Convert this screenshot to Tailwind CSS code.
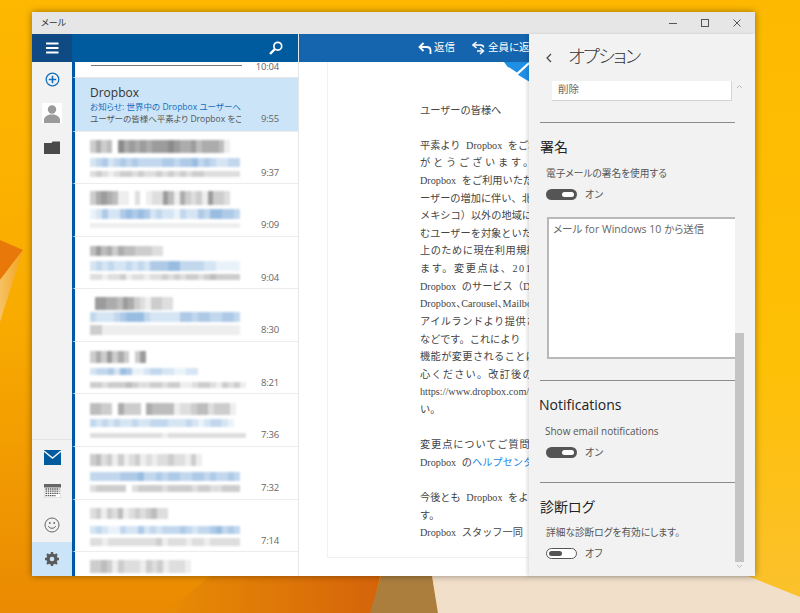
<!DOCTYPE html>
<html lang="ja">
<head>
    <meta charset="UTF-8">
    <script src="https://cdn.jsdelivr.net/npm/@tailwindcss/browser@4"></script>
    <title>メール</title>
</head>
<body class="overflow-hidden">
<div class="relative w-[800px] h-[613px] overflow-hidden bg-[#fbb900] font-['Open_Sans','Noto_Sans_CJK_JP',sans-serif] [font-feature-settings:'palt']">

    <!-- desktop wallpaper -->
    <svg class="absolute inset-0" width="800" height="613" viewBox="0 0 800 613">
        <defs>
            <linearGradient id="wall" x1="0" y1="0" x2="0" y2="1">
                <stop offset="0" stop-color="#feb800"/>
                <stop offset="0.5" stop-color="#f9ac00"/>
                <stop offset="1" stop-color="#ea8a02"/>
            </linearGradient>
            <linearGradient id="wallRight" x1="0" y1="0" x2="0" y2="1">
                <stop offset="0" stop-color="#fdb900"/>
                <stop offset="0.6" stop-color="#fec006"/>
                <stop offset="1" stop-color="#fbc12f"/>
            </linearGradient>
            <linearGradient id="burn" x1="0" y1="0" x2="1" y2="0">
                <stop offset="0" stop-color="#e88c04"/>
                <stop offset="1" stop-color="#d5640a"/>
            </linearGradient>
            <linearGradient id="wedge" x1="0" y1="0" x2="1" y2="0">
                <stop offset="0" stop-color="#f6c264"/>
                <stop offset="1" stop-color="#f4a21c"/>
            </linearGradient>
        </defs>
        <rect width="800" height="613" fill="url(#wall)"/>
        <rect x="740" width="60" height="613" fill="url(#wallRight)"/>
        <polygon points="0,240 23,250 0,280" fill="#e9780a"/>
        <polygon points="0,280 23,250 0,322" fill="url(#wedge)"/>
        <polygon points="165,613 210,576 380,576 372,613" fill="url(#burn)"/>
        <polygon points="381,576 432,576 438,613 370,613" fill="#ab7e3e"/>
        <polygon points="432,576 748,576 800,597 800,613 438,613" fill="#f1dfca"/>
    </svg>

    <!-- mail window -->
    <div class="absolute left-[32px] top-[12px] w-[723px] h-[564px] flex flex-col bg-white shadow-[0_0_7px_rgba(0,0,0,0.4)]">
        <div class="h-[22px] shrink-0 bg-[#e6e6e6] flex items-center justify-between">
            <span class="pl-[9px] text-[9px] text-[#333]">メール</span>
            <div class="flex items-center text-[#555]">
                <svg class="w-[32px] h-[22px]" viewBox="0 0 32 22"><path d="M12 11.5h8" stroke="currentColor" fill="none"/></svg>
                <svg class="w-[32px] h-[22px]" viewBox="0 0 32 22"><rect x="12.5" y="7.5" width="7" height="7" stroke="currentColor" fill="none"/></svg>
                <svg class="w-[32px] h-[22px] mr-[2px]" viewBox="0 0 32 22"><path d="M12.5 7.5l7 7M19.5 7.5l-7 7" stroke="currentColor" fill="none"/></svg>
            </div>
        </div>

        <div class="flex-1 min-h-0 flex">
            <!-- nav rail -->
            <div class="w-[40px] shrink-0 bg-[#f2f2f2] flex flex-col">
                <div class="h-[28px] bg-[#0f4a85] flex items-center justify-center">
                    <svg width="14" height="12" viewBox="0 0 14 12"><path d="M1 1.5h12.500M1 6h12.500M1 10.500h12.500" stroke="#fff" stroke-width="2"/></svg>
                </div>
                <div class="h-[34px] flex items-center justify-center">
                    <svg width="15" height="15" viewBox="0 0 15 15" fill="none" stroke="#106ebe" stroke-width="1.300"><circle cx="7.500" cy="7.500" r="6.300"/><path d="M7.500 3.800v7.400M3.800 7.500h7.400" stroke-width="1.600"/></svg>
                </div>
                <div class="h-[20px] mt-[7px] mx-[10px] bg-white flex items-center justify-center">
                    <svg width="20" height="20" viewBox="0 0 20 20" fill="#9a9a9a"><circle cx="10" cy="6.500" r="4.200"/><path d="M2 20v-3c0-3 3-4.500 5.500-5.500h5c2.500 1 5.500 2.500 5.500 5.500v3z"/></svg>
                </div>
                <div class="h-[48px] flex items-center justify-center">
                    <svg width="16" height="13" viewBox="0 0 16 13" fill="#4a4a4a"><path d="M0 2h6l1.500 0 1-1.500H16V13H0z"/></svg>
                </div>
                <div class="flex-1 border-b border-[#e2e2e2]"></div>
                <div class="h-[34px] flex items-center justify-center">
                    <svg width="17" height="15" viewBox="0 0 17 15"><rect width="17" height="15" y="0" fill="#005a9e"/><path d="M0 1l8.500 7L17 1" fill="none" stroke="#f2f2f2" stroke-width="1.400"/></svg>
                </div>
                <div class="h-[34px] flex items-center justify-center">
                    <svg width="17" height="14" viewBox="0 0 17 14"><rect width="17" height="14" fill="#fff" stroke="#999" stroke-width="0.500"/><rect width="17" height="3.500" fill="#666"/><path d="M1.500 5h14M1.500 7.200h14M1.500 9.400h14M1.500 11.600h10" stroke="#555" stroke-width="1.300" stroke-dasharray="1.500 0.700"/></svg>
                </div>
                <div class="h-[34px] flex items-center justify-center">
                    <svg width="16" height="16" viewBox="0 0 16 16" fill="none" stroke="#666" stroke-width="1"><circle cx="8" cy="8" r="7"/><path d="M4.500 9.500c1 2.500 6 2.500 7 0" stroke-linecap="round"/><circle cx="5.800" cy="6" r="0.900" fill="#666" stroke="none"/><circle cx="10.200" cy="6" r="0.900" fill="#666" stroke="none"/></svg>
                </div>
                <div class="h-[34px] bg-[#cce4f7] flex items-center justify-center">
                    <svg width="16" height="16" viewBox="0 0 16 16" fill="none"><path d="M8 1v14M1 8h14M3 3l10 10M13 3L3 13" stroke="#5a5a5a" stroke-width="2.400"/><circle cx="8" cy="8" r="4.300" stroke="#5a5a5a" stroke-width="2.600"/><circle cx="8" cy="8" r="2.300" fill="#cce4f7"/></svg>
                </div>
            </div>

            <!-- message list -->
            <div class="w-[227px] shrink-0 flex flex-col overflow-hidden border-r border-[#e6e6e6]">
                <div class="h-[28px] shrink-0 bg-[#005a9e] flex items-center justify-end pr-[15px]">
                    <svg width="14" height="14" viewBox="0 0 14 14" fill="none" stroke="#fff" stroke-width="1.700"><circle cx="8.800" cy="5.200" r="3.900"/><path d="M5.800 8.200L1 13" stroke-width="2.400"/></svg>
                </div>
                <div class="h-[16px] shrink-0 border-l-[3px] border-[#0058a8] border-b border-b-[#e6e6e6] relative">
                    <div class="absolute left-[16px] top-[3px] w-[151px] h-px bg-[#777]"></div>
                    <span class="absolute right-[19px] top-[-3px] text-[9.500px] tracking-[-0.200px] leading-[16px] text-[#666]">10:04</span>
                </div>
                <div class="h-[52.500px] shrink-0 border-l-[3px] border-[#0058a8] bg-[#cce4f7] flex">
                    <div class="w-[151px] ml-[15px] overflow-hidden whitespace-nowrap">
                        <p class="mt-[7px] text-[12px] leading-[16px] text-[#333]">Dropbox</p>
                        <p class="text-[8.500px] leading-[12px] text-[#106ebe]">お知らせ: 世界中の Dropbox ユーザーへのお知らせ</p>
                        <p class="text-[8.500px] leading-[12px] text-[#555]">ユーザーの皆様へ平素より Dropbox をご利用</p>
                    </div>
                    <span class="ml-auto mr-[19px] mt-[33px] text-[9.500px] tracking-[-0.200px] leading-[16px] text-[#666]">9:55</span>
                </div>
                <div id="rows"></div>
            </div>

            <!-- reading pane -->
            <div class="w-[230px] shrink-0 flex flex-col overflow-hidden relative">
                <div class="h-[28px] shrink-0 bg-[#1565ae] flex items-center text-white text-[10.500px] whitespace-nowrap overflow-hidden">
                    <svg class="ml-[119px] shrink-0" width="14" height="13" viewBox="0 0 14 13" fill="none" stroke="#fff" stroke-width="1.800"><path d="M5.500 1L1.500 5l4 4"/><path d="M2 5h6.500c3 0 4 2 4 3.500V12"/></svg>
                    <span class="ml-[2px] shrink-0">返信</span>
                    <svg class="ml-[17px] shrink-0" width="13" height="14" viewBox="0 0 13 14" fill="none" stroke="#fff" stroke-width="1.500"><path d="M4.500 1L1 4l3.500 3"/><path d="M1.500 4h7c2 0 3 1 3 2.500"/><path d="M8 13l3.500-3L8 7"/><path d="M11 10H5"/></svg>
                    <span class="ml-[3px] shrink-0">全員に返信</span>
                </div>
                <div class="flex-1 min-h-0 bg-white pl-[28px] pb-[18px]">
                    <div class="h-full border-l border-b border-[#eef1f5] pl-[92px] relative overflow-hidden">
                        <svg class="absolute left-[176px] top-0" width="26" height="20" viewBox="0 0 26 20"><polygon points="0,0 26,0 26,20 6,8" fill="#1f8fe3"/><path d="M4 6l9 6L25 1" fill="none" stroke="#fff" stroke-width="2.200"/></svg>
                        <div class="pt-[39.500px] w-[110px] overflow-hidden whitespace-nowrap text-[10.200px] leading-[17.620px] text-[#444] font-['Liberation_Serif','Noto_Sans_CJK_JP',serif] [font-feature-settings:normal] [word-spacing:3px]">
                            <p>ユーザーの皆様へ</p>
                            <p class="mt-[17.620px]">平素より Dropbox をご利用いただき</p>
                            <p class="tracking-[2.800px]">がとうございます。</p>
                            <p>Dropbox をご利用いただいている</p>
                            <p>ーザーの増加に伴い、北米</p>
                            <p>メキシコ）以外の地域にお住</p>
                            <p>むユーザーを対象といたしま</p>
                            <p class="tracking-[0.500px]">上のために現在利用規約を</p>
                            <p class="tracking-[1.500px]">ます。変更点は、2016</p>
                            <p>Dropbox のサービス（Dropbox</p>
                            <p class="[font-feature-settings:'palt']">Dropbox、Carousel、Mailbox</p>
                            <p class="tracking-[0.500px]">アイルランドより提供される</p>
                            <p>などです。これにより</p>
                            <p class="tracking-[0.400px]">機能が変更されることは</p>
                            <p class="tracking-[1.200px]">心ください。改訂後の</p>
                            <p>https://www.dropbox.com/</p>
                            <p>い。</p>
                            <p class="mt-[17.620px] tracking-[0.900px]">変更点についてご質問</p>
                            <p>Dropbox の<span class="text-[#1a8ae8]">ヘルプセンター</span></p>
                            <p class="mt-[17.620px]">今後とも Dropbox をよろしく</p>
                            <p>す。</p>
                            <p>Dropbox スタッフ一同</p>
                        </div>
                    </div>
                </div>
            </div>

            <!-- options panel -->
            <div class="w-[226px] shrink-0 bg-[#f2f2f2] relative overflow-hidden shadow-[-2px_0_3px_rgba(0,0,0,0.12)] text-[#555]">
                <div class="h-[47px] flex items-center">
                    <svg class="ml-[17px]" width="6" height="10" viewBox="0 0 6 10" fill="none" stroke="#444" stroke-width="1.200"><path d="M5 1L1 5l4 4"/></svg>
                    <span class="ml-[16px] mb-[4px] text-[18px] tracking-[-1.500px] leading-[30px] font-light text-[#333]">オプション</span>
                </div>
                <div class="ml-[23px] w-[180px] h-[20px] bg-white border-b border-r border-[#d4d4d4] pl-[6px] text-[10.500px] leading-[17px] text-[#666]">削除</div>
                <div class="ml-[11px] w-[195px] h-px bg-[#8c8c8c] mt-[21px]"></div>
                <div class="ml-[11px] mt-[14px] text-[14px] leading-[20px] text-[#222]">署名</div>
                <div class="ml-[17px] mt-[9px] text-[9.700px] leading-[16px]">電子メールの署名を使用する</div>
                <div class="ml-[17px] mt-[4px] flex items-center h-[16px]">
                    <span class="w-[31px] h-[11px] rounded-full bg-[#555] flex items-center justify-end pr-[3px]"><span class="w-[12px] h-[5px] rounded-full bg-white"></span></span>
                    <span class="ml-[8px] text-[10px] leading-[16px]">オン</span>
                </div>
                <div class="ml-[18px] mt-[15px] w-[188px] h-[142px] bg-white border-2 border-r-0 border-[#b9b9b9] pl-[4px] pt-[1px] text-[10.500px] leading-[18px] text-[#666] whitespace-nowrap">メール for Windows 10 から送信</div>
                <div class="ml-[11px] w-[195px] h-px bg-[#8c8c8c] mt-[21px]"></div>
                <div class="ml-[10px] mt-[14px] text-[14px] leading-[20px] text-[#222]">Notifications</div>
                <div class="ml-[16px] mt-[8px] text-[10px] leading-[16px]">Show email notifications</div>
                <div class="ml-[17px] mt-[5px] flex items-center h-[16px]">
                    <span class="w-[31px] h-[11px] rounded-full bg-[#555] flex items-center justify-end pr-[3px]"><span class="w-[12px] h-[5px] rounded-full bg-white"></span></span>
                    <span class="ml-[8px] text-[10px] leading-[16px]">オン</span>
                </div>
                <div class="ml-[11px] w-[195px] h-px bg-[#8c8c8c] mt-[22px]"></div>
                <div class="ml-[11px] mt-[14px] text-[14px] leading-[20px] text-[#222]">診断ログ</div>
                <div class="ml-[17px] mt-[8px] text-[9.700px] leading-[16px]">詳細な診断ログを有効にします。</div>
                <div class="ml-[17px] mt-[4px] flex items-center h-[16px]">
                    <span class="w-[31px] h-[11px] rounded-full border border-[#555] bg-white flex items-center pl-[2px]"><span class="w-[13px] h-[5px] rounded-full bg-[#555]"></span></span>
                    <span class="ml-[8px] text-[10px] leading-[16px]">オフ</span>
                </div>

                <!-- scrollbar over the panel -->
                <svg class="absolute left-[207px] top-[50px]" width="7" height="5" viewBox="0 0 7 5" fill="none" stroke="#bbb"><path d="M1 4l2.500-2.500L6 4"/></svg>
                <div class="absolute left-[206px] top-[299px] w-[9px] h-[229px] bg-[#c4c4c4]"></div>
                <svg class="absolute left-[207px] top-[530px]" width="7" height="5" viewBox="0 0 7 5" fill="none" stroke="#bbb"><path d="M1 1l2.500 2.500L6 1"/></svg>
            </div>
        </div>
    </div>
</div>

<script>
// blurred senders in the list: [title top, title h, title indent, title, subject top, subject h, subject, preview top, preview h, preview, time]
const rows = [
    [8, 13, 0, '3534075656566676556455541', 26, 9, '2342343433334434453432233', 39, 6, '2321233232232323233222222', '9:37'],
    [7, 14, 0, '3565411020122641532316332', 25, 10, '1242245454232213224355443', 39, 5, '1111111111111111111111111', '9:09'],
    [9, 10, 0, '4645354433322', 24, 10, '2323223232444553333221111', 37, 6, '2212231221223232332343333', '9:04'],
    [8, 13, 5, '66554653213322', 23, 10, '3222345553222224434433443', 36, 10, '3311111111111111111111111', '8:30'],
    [9, 12, 0, '3536353036', 26, 7, '233425411233221122', 40, 6, '33233343223323311233213231', '8:21'],
    [9, 12, 0, '44330533305444412234423331', 25, 8, '323232232233322232123321', 39, 5, '22222222222212222222222222', '7:36'],
    [7, 12, 0, '34231312312122322131', 25, 9, '3333344453343443344343343', 38, 7, '2333330233332333323322333', '7:32'],
    [8, 11, 0, '23132412323422', 26, 8, '2321132242323334323345343', 38, 8, '2212222222231222122122222', '7:14'],
    [8, 13, 0, '334313222132312221', 30, 7, '2222211222', 40, 5, '1111111', '']
];

const grey = n => `rgba(90,90,90,${n * 0.1})`;
const blue = n => `rgba(30,110,190,${n * 0.09})`;

function mosaic(pattern, color) {
    // one hard colour stop per blurred character block
    const step = 100 / pattern.length;
    const stops = [...pattern].map((c, i) => `${color(+c)} ${i * step}% ${(i + 1) * step}%`);
    return `linear-gradient(90deg, ${stops.join(', ')})`;
}

const list = document.getElementById('rows');
rows.forEach(r => {
    const row = document.createElement('div');
    row.className = 'h-[52.600px] relative border-l-[3px] border-[#0058a8] border-t border-t-[#ececec] bg-white';
    const lines = [
        [r[0], r[1], r[2], r[3], grey, 5.6],
        [r[4], r[5], 0, r[6], blue, 6],
        [r[7], r[8], 0, r[9], grey, 6]
    ];
    lines.forEach(l => {
        const bar = document.createElement('div');
        bar.className = 'absolute blur-[1px]';
        bar.style.top = l[0] + 'px';
        bar.style.height = l[1] + 'px';
        bar.style.left = 15 + l[2] + 'px';
        bar.style.width = l[3].length * l[5] + 'px';
        bar.style.background = mosaic(l[3], l[4]);
        row.appendChild(bar);
    });
    const time = document.createElement('span');
    time.className = 'absolute right-[19px] top-[33px] text-[9.500px] tracking-[-0.200px] leading-[16px] text-[#666]';
    time.textContent = r[10];
    row.appendChild(time);
    list.appendChild(row);
});
</script>
</body>
</html>
